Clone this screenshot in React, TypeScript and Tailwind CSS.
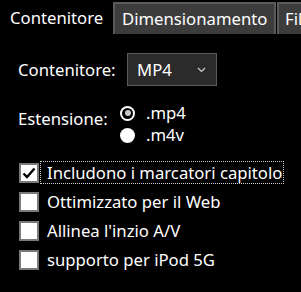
import React from 'react'

const font = { fontFamily: '"Noto Sans", "Open Sans", sans-serif' }

function Check({ checked, label, focused }: { checked?: boolean; label: string; focused?: boolean }) {
  return (
    <div className="flex h-[29px] items-center">
      <div className="flex size-[20px] shrink-0 items-center justify-center border-2 border-[#7a7a7a] bg-white">
        {checked && (
          <svg width="16" height="16" viewBox="0 0 16 16">
            <path d="M2.5 8.5 L6 12 L13.5 3.5" fill="none" stroke="#000" strokeWidth="2.4" />
          </svg>
        )}
      </div>
      <div
        className={
          'ml-[1px] flex h-[23px] items-center whitespace-nowrap pl-[6px] pr-[1px] ' +
          (focused ? 'border border-dotted border-[#cfcfcf]' : 'border border-transparent')
        }
      >
        {label}
      </div>
    </div>
  )
}

function Radio({ checked, label }: { checked?: boolean; label: string }) {
  return (
    <div className="flex h-[22px] items-center">
      {checked ? (
        <div className="flex size-[15px] items-center justify-center rounded-full bg-white">
          <div className="flex size-[11px] items-center justify-center rounded-full bg-black">
            <div className="size-[6px] rounded-full bg-[#c8c8c8]" />
          </div>
        </div>
      ) : (
        <div className="size-[15px] rounded-full bg-white" />
      )}
      <span className="ml-[11px]">{label}</span>
    </div>
  )
}

export default function App() {
  return (
    <div className="h-[292px] w-[301px] overflow-hidden bg-black text-[16.7px] text-white" style={font}>
      <div className="flex h-[35px] items-start">
        <div className="flex h-[35px] w-[113px] shrink-0 items-center pl-[10px]">Contenitore</div>
        <div className="mt-[2px] flex h-[32px] w-[163px] shrink-0 items-center border-2 border-b-0 border-[#5a5a5a] bg-[#3c3c3c] pl-[7px]">
          Dimensionamento
        </div>
        <div className="mt-[2px] ml-[1px] flex h-[32px] w-[60px] shrink-0 items-center border-2 border-b-0 border-[#5a5a5a] bg-[#3c3c3c] pl-[6px]">
          Filtri
        </div>
      </div>

      <div className="flex flex-col pl-[18px] pt-[18px]">
        <div className="flex items-center">
          <span className="w-[109px]">Contenitore:</span>
          <div className="flex h-[33px] w-[90px] items-center justify-between border border-[#5c5c5c] bg-[#2b2b2b] pl-[9px] pr-[10px]">
            <span>MP4</span>
            <svg width="9" height="6" viewBox="0 0 9 6">
              <path d="M1 1 L4.5 4.5 L8 1" fill="none" stroke="#cfcfcf" strokeWidth="1.2" />
            </svg>
          </div>
        </div>

        <div className="mt-[16px] flex items-start">
          <span className="mt-[4px] w-[102px]">Estensione:</span>
          <div className="flex flex-col">
            <Radio checked label=".mp4" />
            <Radio label=".m4v" />
          </div>
        </div>

        <div className="mt-[12px] flex flex-col pl-[1px]">
          <Check checked focused label="Includono i marcatori capitolo" />
          <Check label="Ottimizzato per il Web" />
          <Check label="Allinea l'inzio A/V" />
          <Check label="supporto per iPod 5G" />
        </div>
      </div>
    </div>
  )
}
